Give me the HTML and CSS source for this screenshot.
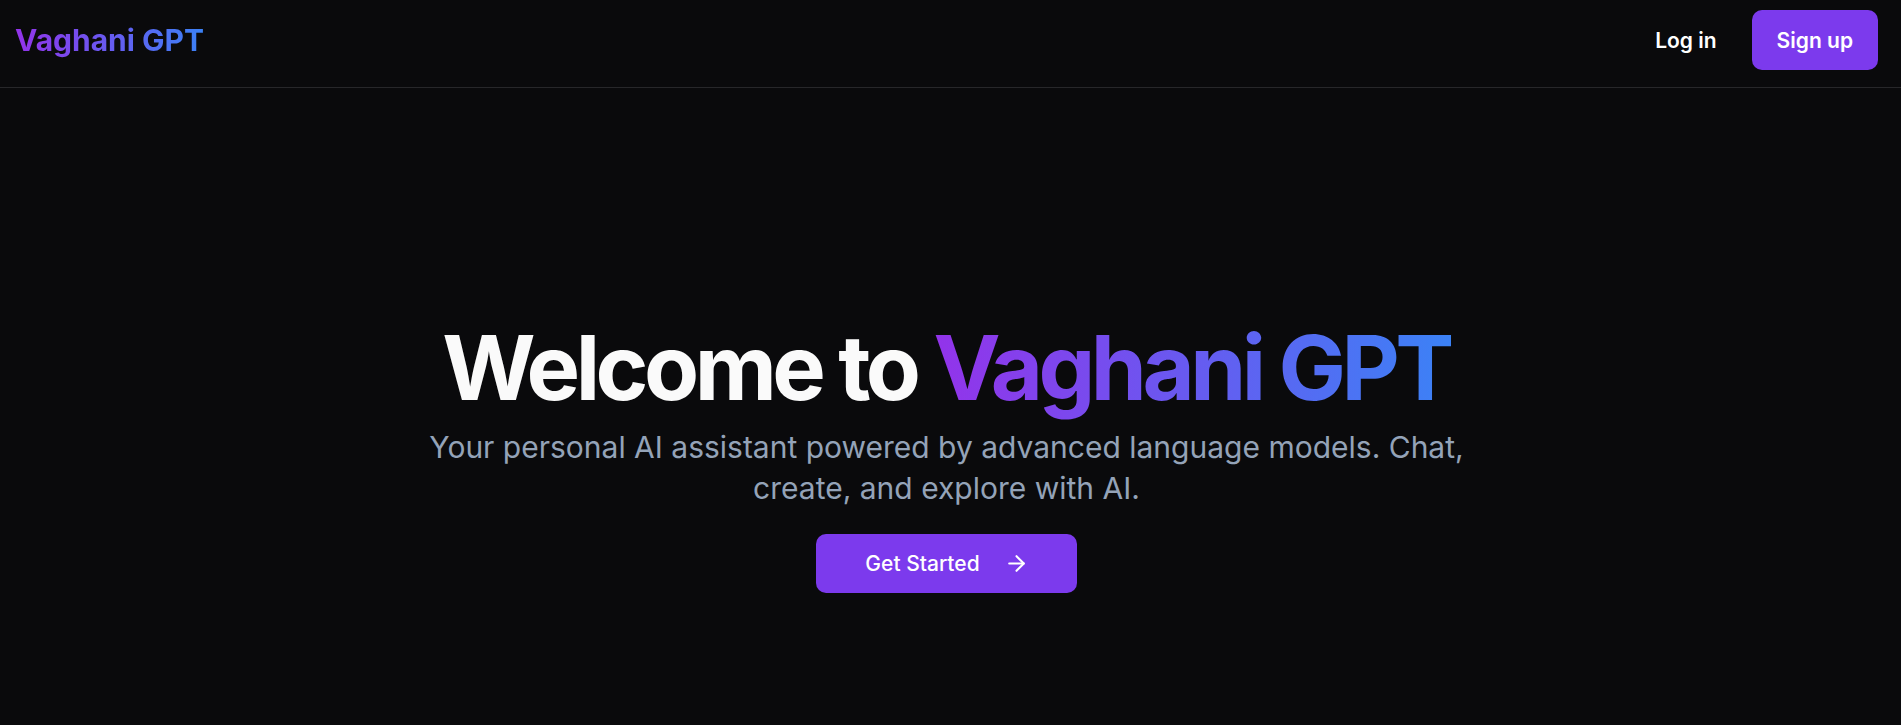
FILE: index.html
```html
<!DOCTYPE html>
<html lang="en">
<head>
<meta charset="utf-8">
<title>Vaghani GPT</title>
<link rel="stylesheet" href="styles.css">
</head>
<body>
<header class="topbar">
  <a class="logo" href="#">Vaghani GPT</a>
  <nav class="actions">
    <a class="btn-ghost" href="#">Log in</a>
    <a class="btn-primary" href="#">Sign up</a>
  </nav>
</header>
<main class="hero">
  <h1 class="hero-title">Welcome to <span class="grad">Vaghani GPT</span></h1>
  <p class="hero-sub">Your personal AI assistant powered by advanced language models. Chat, create, and explore with AI.</p>
  <a class="btn-cta" href="#">
    <span>Get Started</span>
    <svg class="arrow" viewBox="0 0 24 24" fill="none" stroke="currentColor" stroke-width="2" stroke-linecap="round" stroke-linejoin="round"><path d="M5 12h14"/><path d="m12 5 7 7-7 7"/></svg>
  </a>
</main>
</body>
</html>
```
FILE: styles.css
```css
* { box-sizing: border-box; }
html, body { margin: 0; padding: 0; }
body {
  background: #0a0a0c;
  color: #fafafa;
  font-family: Inter, "Noto Sans", sans-serif;
  min-height: 725px;
}
a { text-decoration: none; color: inherit; }

.topbar {
  display: flex;
  align-items: center;
  justify-content: space-between;
  height: 88px;
  padding: 10px 23px 17px 15px;
  border-bottom: 1px solid #27272a;
}
.logo {
  font-size: 30px;
  font-weight: 700;
  line-height: 1.3;
  background: linear-gradient(90deg, #9333ea, #3b82f6);
  -webkit-background-clip: text;
  background-clip: text;
  color: transparent;
}
.actions {
  display: flex;
  align-items: center;
  gap: 10px;
}
.btn-ghost, .btn-primary {
  display: inline-flex;
  align-items: center;
  justify-content: center;
  height: 60px;
  padding: 0 25px;
  font-size: 21px;
  font-weight: 600;
  border-radius: 10px;
  color: #ffffff;
}
.btn-primary { background: #7c3aed; }

.hero {
  display: flex;
  flex-direction: column;
  align-items: center;
  text-align: center;
  padding: 235px 8px 0 0;
}
.hero-title {
  margin: 0 0 14px;
  font-size: 90px;
  line-height: 90px;
  font-weight: 700;
  letter-spacing: -4.5px;
  color: #fafafa;
}
.grad {
  background: linear-gradient(90deg, #9333ea, #3b82f6);
  -webkit-background-clip: text;
  background-clip: text;
  color: transparent;
}
.hero-sub {
  margin: 0 0 25px;
  max-width: 1120px;
  font-size: 30px;
  line-height: 41px;
  color: #94a3b8;
}
.btn-cta {
  display: inline-flex;
  align-items: center;
  gap: 24px;
  height: 59px;
  padding: 0 48px 0 49px;
  background: #7c3aed;
  color: #ffffff;
  border-radius: 10px;
  font-size: 21px;
  font-weight: 500;
}
.arrow { width: 25px; height: 25px; }
```
